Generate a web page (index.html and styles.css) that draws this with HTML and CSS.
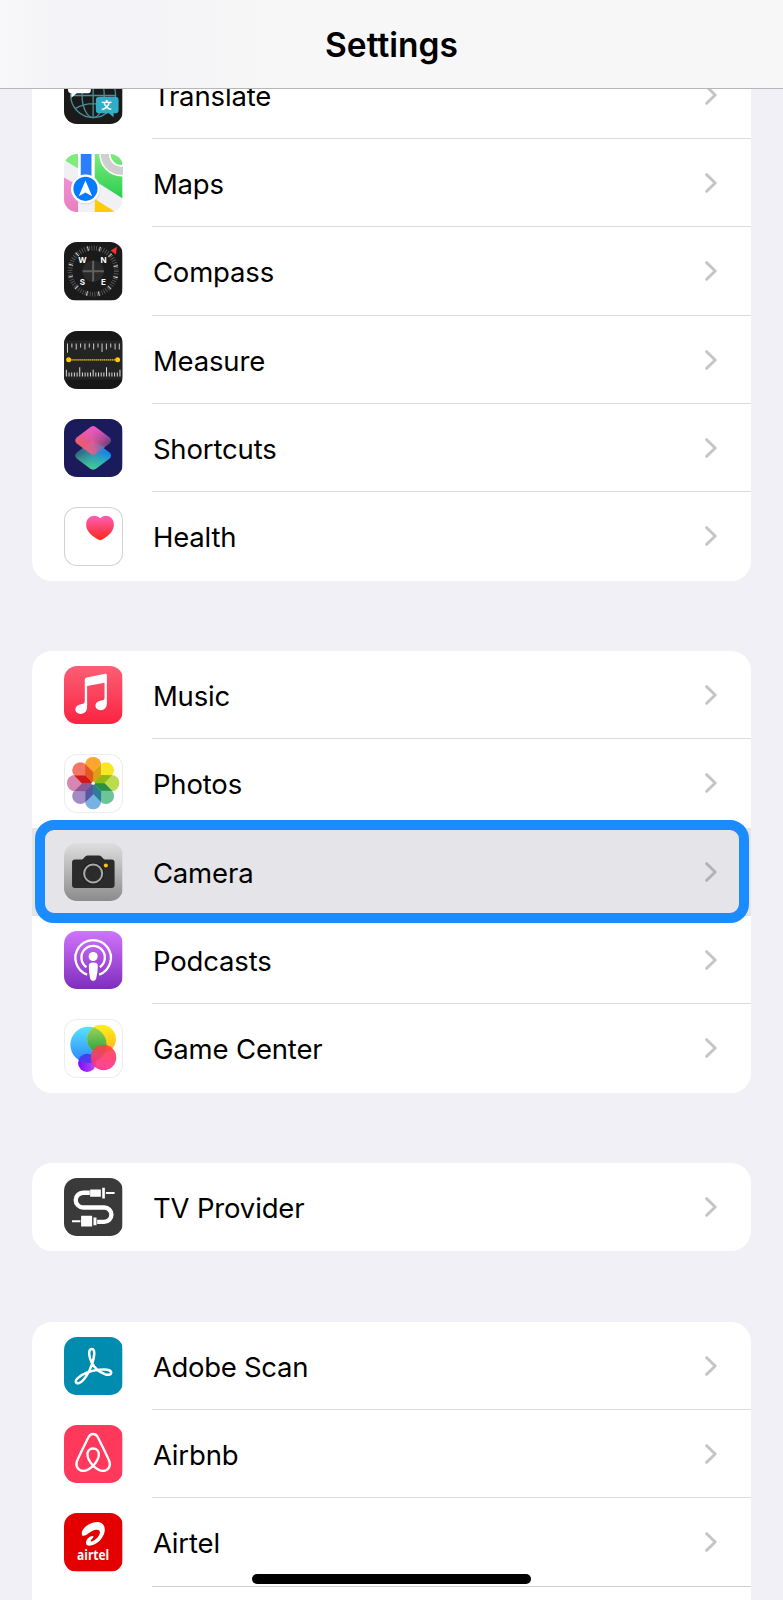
FILE: index.html
```html
<!DOCTYPE html>
<html lang="en">

<head>
    <meta charset="UTF-8">
    <meta name="viewport" content="width=device-width, initial-scale=1.0">
    <title>Settings</title>
    <link rel="stylesheet" href="styles.css">
</head>

<body>
    <header class="navbar">
        <h1>Settings</h1>
    </header>

    <main class="settings">
        <ul class="group first">
            <li class="row">
                <svg class="icon" viewBox="0 0 174 174">
                    <rect width="174" height="174" fill="#1a1a1a"/>
                    <g fill="none" stroke="#4b8c99" stroke-width="4">
                        <circle cx="87" cy="87" r="67"/>
                        <ellipse cx="87" cy="87" rx="33" ry="67"/>
                        <path d="M87 20V154M20 88H154M33 127Q87 98 141 127"/>
                    </g>
                    <path d="M12 20H80V73Q80 81 72 81H38L22 95V81Q12 81 12 71Z" fill="#fff"/>
                    <path d="M105 92H153Q163 92 163 102V131Q163 141 153 141H148V153L134 141H105Q95 141 95 131V102Q95 92 105 92Z" fill="#30aec9"/>
                    <text class="glyph" x="127" y="128" font-size="31">文</text>
                </svg>
                <div class="content"><span class="label">Translate</span><svg class="chevron" viewBox="0 0 12 20"><path d="M1.7 1.7L10.2 10L1.7 18.3"/></svg></div>
            </li>
            <li class="row">
                <svg class="icon" viewBox="0 0 174 174">
                    <defs>
                        <linearGradient id="mapGreen" x1="0" y1="0" x2="0" y2="1"><stop offset="0" stop-color="#7cec7c"/><stop offset="1" stop-color="#29cd50"/></linearGradient>
                        <linearGradient id="mapPink" x1="0" y1="0" x2="0" y2="1"><stop offset="0" stop-color="#f48fd4"/><stop offset="1" stop-color="#e67fc0"/></linearGradient>
                    </defs>
                    <rect width="174" height="174" fill="#f1f1f5"/>
                    <path d="M0 0H42V43L0 18Z" fill="#7dec7d"/>
                    <path d="M0 70L42 93V174H0Z" fill="url(#mapPink)"/>
                    <path d="M92 0H174V132L92 80Z" fill="url(#mapGreen)"/>
                    <path d="M92 134L155 174H92Z" fill="#ffcb05"/>
                    <circle cx="172" cy="0" r="50" fill="none" stroke="#fff" stroke-width="34"/>
                    <circle cx="172" cy="0" r="50" fill="none" stroke="#cfcfcf" stroke-width="24"/>
                    <path d="M42 0H90V90H42Z" fill="#fff"/>
                    <path d="M50 0H82V90H50Z" fill="#2a7fff"/>
                    <circle cx="64" cy="106" r="45" fill="#b9b9c4" opacity=".35"/>
                    <circle cx="64" cy="104" r="40" fill="#fff" stroke="#fff" stroke-width="6"/>
                    <circle cx="64" cy="104" r="36" fill="#047aff"/>
                    <path d="M64 79L84 126L64 115L44 126Z" fill="#fff"/>
                </svg>
                <div class="content"><span class="label">Maps</span><svg class="chevron" viewBox="0 0 12 20"><path d="M1.7 1.7L10.2 10L1.7 18.3"/></svg></div>
            </li>
            <li class="row">
                <svg class="icon" viewBox="0 0 174 174">
                    <rect width="174" height="174" fill="#1a1a1a"/>
                    <circle cx="87" cy="87" r="69" fill="none" stroke="#666" stroke-width="14" stroke-dasharray="2.2 5.026"/>
                    <circle cx="87" cy="87" r="69" fill="none" stroke="#ddd" stroke-width="14" stroke-dasharray="2.5 33.628" stroke-dashoffset="-17"/>
                    <circle cx="87" cy="87" r="32" fill="#292929"/>
                    <path d="M56 87H119M87 56V118" stroke="#606060" stroke-width="6"/>
                    <g class="glyph" font-size="24">
                        <text x="55" y="63">W</text>
                        <text x="118" y="63">N</text>
                        <text x="55" y="129">S</text>
                        <text x="118" y="129">E</text>
                    </g>
                    <path d="M139 25L158 14L155 37Z" fill="#f8312f"/>
                </svg>
                <div class="content"><span class="label">Compass</span><svg class="chevron" viewBox="0 0 12 20"><path d="M1.7 1.7L10.2 10L1.7 18.3"/></svg></div>
            </li>
            <li class="row">
                <svg class="icon" viewBox="0 0 174 174">
                    <rect width="174" height="174" fill="#171717"/>
                    <rect y="28" width="174" height="117" fill="#242424"/>
                    <path d="M10.500 37V65M23.500 37V49M36.500 37V55M49.500 37V49M62.500 37V55M75.500 37V49M88.500 37V55M101.500 37V49M113.500 37V63M126.500 37V55M139.500 37V49M152.500 37V55M165 37V55" stroke="#ccc" stroke-width="3"/>
                    <path d="M7 116V136M15 124V136M23 124V136M31 124V136M39 124V136M47 108V136M55 124V136M63 124V136M71 124V136M79 124V136M87 116V136M95 124V136M103 124V136M111 124V136M119 124V136M127 108V136M135 124V136M143 124V136M151 124V136M159 124V136M167 116V136" stroke="#ddd" stroke-width="3"/>
                    <path d="M22 86H154" stroke="#e0a80c" stroke-width="5" stroke-dasharray="4 2"/>
                    <circle cx="14" cy="86" r="7.500" fill="#ffc90a"/>
                    <circle cx="160" cy="86" r="7.500" fill="#ffc90a"/>
                </svg>
                <div class="content"><span class="label">Measure</span><svg class="chevron" viewBox="0 0 12 20"><path d="M1.7 1.7L10.2 10L1.7 18.3"/></svg></div>
            </li>
            <li class="row">
                <svg class="icon" viewBox="0 0 174 174">
                    <defs>
                        <linearGradient id="scTop" x1="0" y1=".7" x2="1" y2=".5"><stop offset="0" stop-color="#ff6257"/><stop offset=".5" stop-color="#e55a98"/><stop offset="1" stop-color="#5d3f7c"/></linearGradient>
                        <linearGradient id="scPink" x1="0" y1="0" x2="0" y2="1"><stop offset="0" stop-color="#f057c8"/><stop offset=".6" stop-color="#f057c8" stop-opacity="0"/></linearGradient>
                        <linearGradient id="scBottom" x1="0" y1=".4" x2="1" y2=".5"><stop offset="0" stop-color="#2f5f75"/><stop offset=".5" stop-color="#2f93b4"/><stop offset="1" stop-color="#0f80ff"/></linearGradient>
                        <linearGradient id="scGreen" x1="0" y1="1" x2="0" y2="0"><stop offset="0" stop-color="#42cf92"/><stop offset=".6" stop-color="#42cf92" stop-opacity="0"/></linearGradient>
                        <linearGradient id="scOverlap" x1="0" y1="0" x2="1" y2="0"><stop offset="0" stop-color="#c06a80" stop-opacity=".2"/><stop offset="1" stop-color="#3d86d6"/></linearGradient>
                        <path id="tile" d="M78 25Q87 19 96 25L136 55Q145 64 136 73L96 103Q87 109 78 103L38 73Q29 64 38 55Z"/>
                    </defs>
                    <rect width="174" height="174" fill="#1b1b5c"/>
                    <g transform="translate(0 45)">
                        <use href="#tile" fill="url(#scBottom)"/>
                        <use href="#tile" fill="url(#scGreen)"/>
                    </g>
                    <use href="#tile" fill="url(#scTop)" opacity=".94"/>
                    <use href="#tile" fill="url(#scPink)"/>
                    <path d="M78 79L96 75Q100 72 104 75L122 84L96 103Q91 107 87 107Z" fill="url(#scOverlap)" opacity=".8"/>
                </svg>
                <div class="content"><span class="label">Shortcuts</span><svg class="chevron" viewBox="0 0 12 20"><path d="M1.7 1.7L10.2 10L1.7 18.3"/></svg></div>
            </li>
            <li class="row">
                <svg class="icon bordered" viewBox="0 0 174 174">
                    <defs>
                        <linearGradient id="heart" x1="0" y1="0" x2="0" y2="1"><stop offset="0" stop-color="#fb5fb8"/><stop offset="1" stop-color="#ff2616"/></linearGradient>
                    </defs>
                    <path d="M108 34C97 20 66 25 66 53C66 74 88 90 104 98Q108 100 112 98C128 90 149 74 149 53C149 25 119 20 108 34Z" fill="url(#heart)"/>
                </svg>
                <div class="content"><span class="label">Health</span><svg class="chevron" viewBox="0 0 12 20"><path d="M1.7 1.7L10.2 10L1.7 18.3"/></svg></div>
            </li>
        </ul>

        <ul class="group">
            <li class="row">
                <svg class="icon" viewBox="0 0 174 174">
                    <defs>
                        <linearGradient id="music" x1="0" y1="0" x2="0" y2="1"><stop offset="0" stop-color="#fb5f76"/><stop offset="1" stop-color="#fb2340"/></linearGradient>
                    </defs>
                    <rect width="174" height="174" fill="url(#music)"/>
                    <path d="M62 41Q62 35 68 34L123 23Q128 22 128 28V110C128 124 121 132 109 132C99 132 94 126 94 119C94 109 102 105 111 103C118 102 121 101 121 94V50L69 60V122C69 136 61 143 50 143C40 143 34 137 34 130C34 120 42 116 51 114C59 113 62 111 62 104Z" fill="#fff"/>
                </svg>
                <div class="content"><span class="label">Music</span><svg class="chevron" viewBox="0 0 12 20"><path d="M1.7 1.7L10.2 10L1.7 18.3"/></svg></div>
            </li>
            <li class="row no-line">
                <svg class="icon bordered light" viewBox="0 0 174 174">
                    <defs>
                        <path id="fold" d="M0 0V-34L23 -56V-23Z"/>
                    </defs>
                    <g transform="translate(87 87)">
                        <rect x="-24" y="-78" width="48" height="73" rx="23" fill="#faa62f"/>
                        <rect x="-24" y="-78" width="48" height="73" rx="23" fill="#f9e626" transform="rotate(45)"/>
                        <rect x="-24" y="-78" width="48" height="73" rx="23" fill="#bcdb50" transform="rotate(90)"/>
                        <rect x="-24" y="-78" width="48" height="73" rx="23" fill="#6cc598" transform="rotate(135)"/>
                        <rect x="-24" y="-78" width="48" height="73" rx="23" fill="#78b2e2" transform="rotate(180)"/>
                        <rect x="-24" y="-78" width="48" height="73" rx="23" fill="#a58bc6" transform="rotate(225)"/>
                        <rect x="-24" y="-78" width="48" height="73" rx="23" fill="#d788b2" transform="rotate(270)"/>
                        <rect x="-24" y="-78" width="48" height="73" rx="23" fill="#f27764" transform="rotate(315)"/>
                        <use href="#fold" fill="#dba116"/>
                        <use href="#fold" fill="#93b913" transform="rotate(45)"/>
                        <use href="#fold" fill="#2b9142" transform="rotate(90)"/>
                        <use href="#fold" fill="#2b7f94" transform="rotate(135)"/>
                        <use href="#fold" fill="#5458a0" transform="rotate(180)"/>
                        <use href="#fold" fill="#8e5795" transform="rotate(225)"/>
                        <use href="#fold" fill="#d0191b" transform="rotate(270)"/>
                        <use href="#fold" fill="#e8571c" transform="rotate(315)"/>
                        <circle r="5" fill="#fff"/>
                    </g>
                </svg>
                <div class="content"><span class="label">Photos</span><svg class="chevron" viewBox="0 0 12 20"><path d="M1.7 1.7L10.2 10L1.7 18.3"/></svg></div>
            </li>
            <li class="row selected no-line">
                <svg class="icon" viewBox="0 0 174 174">
                    <defs>
                        <linearGradient id="camera" x1="0" y1="0" x2="0" y2="1"><stop offset="0" stop-color="#dedede"/><stop offset="1" stop-color="#8b8b8b"/></linearGradient>
                    </defs>
                    <rect width="174" height="174" fill="url(#camera)"/>
                    <path d="M33 49H54Q58 48 62 42Q65 37 70 37H105Q110 37 113 42Q117 48 121 49H142Q151 49 151 58V125Q151 134 142 134H33Q24 134 24 125V58Q24 49 33 49Z" fill="#2b2b2b"/>
                    <circle cx="87" cy="91" r="33" fill="#1f1f1f"/>
                    <circle cx="87" cy="91" r="27" fill="#2b2b2b" stroke="#aaa" stroke-width="6"/>
                    <circle cx="125" cy="67" r="6" fill="#ffc800"/>
                </svg>
                <div class="content"><span class="label">Camera</span><svg class="chevron" viewBox="0 0 12 20"><path d="M1.7 1.7L10.2 10L1.7 18.3"/></svg></div>
                <div class="highlight"></div>
            </li>
            <li class="row">
                <svg class="icon" viewBox="0 0 174 174">
                    <defs>
                        <linearGradient id="podcasts" x1="0" y1="0" x2="0" y2="1"><stop offset="0" stop-color="#d173fb"/><stop offset="1" stop-color="#7e2dbd"/></linearGradient>
                    </defs>
                    <rect width="174" height="174" fill="url(#podcasts)"/>
                    <g fill="none" stroke="#fff" stroke-width="7">
                        <path d="M69 130A53 53 0 1 1 105 130"/>
                        <path d="M67 108A35 35 0 1 1 107 108"/>
                    </g>
                    <circle cx="87" cy="76" r="13.500" fill="#fff"/>
                    <path d="M74 104Q74 94 87 94Q101 94 101 104Q101 124 96 142Q94 149 87 149Q80 149 78 142Q74 124 74 104Z" fill="#fff"/>
                </svg>
                <div class="content"><span class="label">Podcasts</span><svg class="chevron" viewBox="0 0 12 20"><path d="M1.7 1.7L10.2 10L1.7 18.3"/></svg></div>
            </li>
            <li class="row">
                <svg class="icon bordered light" viewBox="0 0 174 174">
                    <defs>
                        <linearGradient id="gcBlue" x1="0" y1="0" x2="0" y2="1"><stop offset="0" stop-color="#42e2fd"/><stop offset="1" stop-color="#1574fb"/></linearGradient>
                        <linearGradient id="gcYellow" x1="0" y1="0" x2="0" y2="1"><stop offset="0" stop-color="#fff01a"/><stop offset="1" stop-color="#ffb01f"/></linearGradient>
                        <linearGradient id="gcGreen" x1="0" y1="0" x2="0" y2="1"><stop offset="0" stop-color="#a9d657"/><stop offset="1" stop-color="#1ea33f"/></linearGradient>
                        <linearGradient id="gcRed" x1="0" y1="0" x2="0" y2="1"><stop offset="0" stop-color="#fb4440"/><stop offset="1" stop-color="#ff2d92"/></linearGradient>
                        <linearGradient id="gcPurple" x1="0" y1="0" x2="1" y2="0"><stop offset="0" stop-color="#7a0cf5"/><stop offset="1" stop-color="#c04bfa"/></linearGradient>
                        <clipPath id="gcClip"><circle cx="73" cy="77" r="54"/></clipPath>
                    </defs>
                    <circle cx="69" cy="131" r="27" fill="url(#gcPurple)"/>
                    <circle cx="73" cy="77" r="54" fill="url(#gcBlue)" opacity=".9"/>
                    <circle cx="69" cy="131" r="27" fill="#4a3cf0" clip-path="url(#gcClip)"/>
                    <circle cx="112" cy="60" r="43" fill="url(#gcYellow)"/>
                    <circle cx="112" cy="60" r="43" fill="url(#gcGreen)" clip-path="url(#gcClip)"/>
                    <circle cx="118" cy="115" r="38" fill="url(#gcRed)" opacity=".9"/>
                </svg>
                <div class="content"><span class="label">Game Center</span><svg class="chevron" viewBox="0 0 12 20"><path d="M1.7 1.7L10.2 10L1.7 18.3"/></svg></div>
            </li>
        </ul>

        <ul class="group">
            <li class="row">
                <svg class="icon" viewBox="0 0 174 174">
                    <rect width="174" height="174" fill="#3a3a3a"/>
                    <path d="M77 44H57A22 22 0 0 0 57 88H120A21.500 21.500 0 0 1 120 131H99" fill="none" stroke="#fff" stroke-width="13"/>
                    <path d="M78 34H110V56H78ZM114 29H122V61H114ZM51 113H84V145H51ZM88 118H97V141H88Z" fill="#fff"/>
                    <path d="M125 45H151M24 129H49" stroke="#fff" stroke-width="6"/>
                </svg>
                <div class="content"><span class="label">TV Provider</span><svg class="chevron" viewBox="0 0 12 20"><path d="M1.7 1.7L10.2 10L1.7 18.3"/></svg></div>
            </li>
        </ul>

        <ul class="group last">
            <li class="row">
                <svg class="icon" viewBox="0 0 174 174">
                    <rect width="174" height="174" fill="#008cae"/>
                    <path d="M83 36C71 36 74 60 83 77C91 92 104 104 122 111C134 115 141 112 141 106C141 97 122 95 104 98C80 101 58 108 42 122C30 132 36 141 46 137C60 131 76 104 84 80C90 62 95 36 83 36Z" fill="none" stroke="#fff" stroke-width="7.500"/>
                </svg>
                <div class="content"><span class="label tight">Adobe Scan</span><svg class="chevron" viewBox="0 0 12 20"><path d="M1.7 1.7L10.2 10L1.7 18.3"/></svg></div>
            </li>
            <li class="row">
                <svg class="icon" viewBox="0 0 174 174">
                    <rect width="174" height="174" fill="#ff385c"/>
                    <path d="M87 122C76 132 68 137 58 137C44 137 34 125 38 110C41 101 70 42 74 35Q79 27 87 27Q95 27 100 35C104 42 133 101 136 110C140 125 130 137 116 137C106 137 98 132 87 122C78 112 70 101 70 88C70 77 77 70 87 70C97 70 104 77 104 88C104 101 96 112 87 122Z" fill="none" stroke="#fff" stroke-width="7"/>
                </svg>
                <div class="content"><span class="label">Airbnb</span><svg class="chevron" viewBox="0 0 12 20"><path d="M1.7 1.7L10.2 10L1.7 18.3"/></svg></div>
            </li>
            <li class="row">
                <svg class="icon" viewBox="0 0 174 174">
                    <rect width="174" height="174" fill="#e40000"/>
                    <path d="M53 61C54 40 84 26 102 27C118 29 124 42 121 57C116 80 94 97 76 98C66 98 63 90 68 80C74 70 86 66 88 70C90 75 78 80 80 84C82 88 104 76 107 60C109 48 96 48 84 54C74 59 66 68 59 68C54 68 53 65 53 61Z" fill="#fff"/>
                    <text class="glyph brand" x="87" y="140" textLength="96" lengthAdjust="spacingAndGlyphs">airtel</text>
                </svg>
                <div class="content"><span class="label">Airtel</span><svg class="chevron" viewBox="0 0 12 20"><path d="M1.7 1.7L10.2 10L1.7 18.3"/></svg></div>
            </li>
        </ul>
    </main>

    <div class="home-bar"></div>
</body>

</html>
```

FILE: styles.css
```css
* {
    box-sizing: border-box;
}

body {
    margin: 0;
    height: 1600px;
    overflow: hidden;
    background-color: #f1f0f6;
    color: #000;
    font-family: Inter, "Noto Sans CJK SC", sans-serif;
}

.navbar {
    position: relative;
    z-index: 2;
    height: 89px;
    display: flex;
    align-items: center;
    justify-content: center;
    background: linear-gradient(to right, #f8f8f9 0, #f4f4f8 60px, #f4f4f8 130px, #f7f7f7 280px);
    border-bottom: 1px solid #b7b7b9;
}

h1 {
    margin: 0;
    padding-top: 1px;
    font-size: 33.5px;
    font-weight: 600;
    line-height: 40px;
}

.settings {
    display: flex;
    flex-direction: column;
    gap: 70.3px;
    margin-top: -38.3px;
    padding: 0 32px;
}

.group {
    margin: 0;
    padding: 0;
    list-style: none;
    background-color: #fff;
    border-radius: 20px;
}

.last {
    height: 300px;
}

.row {
    position: relative;
    display: flex;
    align-items: center;
    height: 88.35px;
    padding-left: 32.3px;
}

.icon {
    flex: none;
    width: 58.3px;
    height: 58.3px;
    border-radius: 13px;
    overflow: hidden;
}

.bordered {
    background-color: #fff;
    box-shadow: inset 0 0 0 1px #d2d2d4;
}

.light {
    box-shadow: inset 0 0 0 1px #ededef;
}

.content {
    flex: 1;
    align-self: stretch;
    display: flex;
    align-items: center;
    justify-content: space-between;
    margin-left: 29.7px;
    padding-right: 34px;
    border-bottom: 1px solid #dcdcde;
}

.row:last-child .content,
.no-line .content {
    border-bottom-color: transparent;
}

.last .row:last-child .content {
    border-bottom-color: #d0d0d3;
}

.label {
    padding-top: 2.5px;
    padding-left: .6px;
    font-size: 27.5px;
    line-height: 34px;
    letter-spacing: -.15px;
}

.tight {
    letter-spacing: -.3px;
}

.chevron {
    width: 12px;
    height: 20px;
    margin-top: .5px;
    fill: none;
    stroke: #c5c5c7;
    stroke-width: 3;
    stroke-linecap: round;
    stroke-linejoin: round;
}

.selected {
    background-color: #e5e4e9;
}

.selected .chevron {
    stroke: #b3b3b5;
}

/* ring around the selected row, spills over its neighbours */
.highlight {
    position: absolute;
    z-index: 1;
    top: -7.500px;
    right: 2px;
    bottom: -7px;
    left: 3px;
    border: 10px solid #1a8cff;
    border-radius: 19px;
}

.glyph {
    fill: #fff;
    font-weight: 700;
    text-anchor: middle;
}

.brand {
    font-family: "Open Sans", sans-serif;
    font-size: 42px;
}

.home-bar {
    position: fixed;
    bottom: 16px;
    left: 252px;
    width: 279px;
    height: 10px;
    border-radius: 5px;
    background-color: #000;
}
```
